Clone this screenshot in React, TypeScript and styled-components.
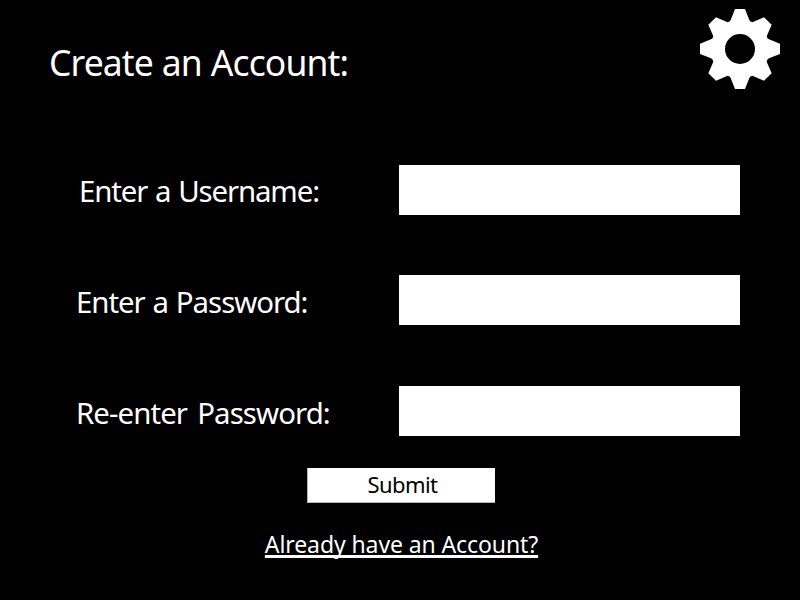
import React from "react";
import styled, { createGlobalStyle } from "styled-components";

const GlobalStyle = createGlobalStyle`
  * { box-sizing: border-box; }
  body { margin: 0; background: #000; }
`;

const Page = styled.main`
  display: flex;
  flex-direction: column;
  width: 800px;
  height: 600px;
  overflow: hidden;
  background: #000;
  color: #fff;
  font-family: "Noto Sans", "Open Sans", sans-serif;
`;

const Header = styled.header`
  display: flex;
  justify-content: space-between;
  height: 165px;
  padding: 9px 20px 0 49px;
`;

const Title = styled.h1`
  margin: 28px 0 0;
  height: 50px;
  font-size: 35.5px;
  line-height: 50px;
  font-weight: 400;
  letter-spacing: -0.88px;
  word-spacing: 0.5px;
  white-space: nowrap;
`;

const SettingsButton = styled.button`
  width: 80px;
  height: 80px;
  padding: 0;
  border: 0;
  background: none;
  color: #fff;

  svg { display: block; }
`;

const Form = styled.form`
  display: flex;
  flex-direction: column;
  align-items: center;
`;

const Fields = styled.div`
  display: grid;
  grid-template-rows: 110px 111px 50px;
  width: 800px;
`;

const Field = styled.div`
  display: grid;
  grid-template-columns: 399px 341px;
  align-items: start;
`;

const Label = styled.label<{ $indent: number; $tracking: number; $gap: number; $drop: number }>`
  padding-left: ${(p) => p.$indent}px;
  padding-top: ${(p) => p.$drop}px;
  height: 50px;
  font-size: 29.4px;
  line-height: 50px;
  letter-spacing: ${(p) => p.$tracking}px;
  word-spacing: ${(p) => p.$gap}px;
  white-space: nowrap;
`;

const Input = styled.input`
  width: 341px;
  height: 50px;
  padding: 0 10px;
  border: 0;
  border-radius: 0;
  background: #fff;
  font: 400 24px "Noto Sans", sans-serif;
`;

const Submit = styled.button`
  width: 188px;
  height: 35px;
  margin: 32px 0 0 2px;
  padding: 0 0 1px 2px;
  border: 1px solid #b4b8b4;
  border-width: 0 0 1px 1px;
  background: #fff;
  color: #000;
  font: 400 22px/33px "Noto Sans", "Open Sans", sans-serif;
  letter-spacing: -0.6px;
`;

const LoginLink = styled.a`
  margin: 25px 0 0 3px;
  height: 32px;
  color: #fff;
  font-size: 23px;
  line-height: 32px;
  letter-spacing: -0.1px;
  white-space: nowrap;
  text-decoration: underline;
  text-decoration-thickness: 3px;
  text-underline-offset: 2px;
  text-decoration-skip-ink: none;
`;

const GearIcon = () => (
  <svg width="80" height="80" viewBox="30 27 240 240" aria-hidden="true">
    <path
      fill="currentColor"
      fillRule="evenodd"
      d="M135 27H165L178 60Q180 66 187 67L222 52L245 74L230 109Q231 116 237 118L270 131V162L237 175Q231 178 230 185L245 220L222 242L187 227Q180 228 178 234L165 267H135L122 234Q120 228 113 227L78 242L55 220L70 185Q69 178 63 175L30 162V131L63 118Q69 116 70 109L55 74L78 52L113 67Q120 66 122 60Z
      M150 102A45 45 0 1 0 150 192A45 45 0 1 0 150 102Z"
    />
  </svg>
);

const fields = [
  { id: "username", label: "Enter a Username:", type: "text", indent: 79, tracking: -1.14, gap: 1.4, drop: 1 },
  { id: "password", label: "Enter a Password:", type: "password", indent: 76, tracking: -1.02, gap: 1.2, drop: 2 },
  { id: "confirm", label: "Re-enter Password:", type: "password", indent: 76, tracking: -0.92, gap: 3.5, drop: 2 },
];

export default function App() {
  return (
    <>
      <GlobalStyle />
      <Page>
        <Header>
          <Title>Create an Account:</Title>
          <SettingsButton type="button" aria-label="Settings">
            <GearIcon />
          </SettingsButton>
        </Header>
        <Form onSubmit={(e) => e.preventDefault()}>
          <Fields>
            {fields.map((f) => (
              <Field key={f.id}>
                <Label
                  htmlFor={f.id}
                  $indent={f.indent}
                  $tracking={f.tracking}
                  $gap={f.gap}
                  $drop={f.drop}
                >
                  {f.label}
                </Label>
                <Input id={f.id} type={f.type} />
              </Field>
            ))}
          </Fields>
          <Submit type="submit">Submit</Submit>
          <LoginLink href="#">Already have an Account?</LoginLink>
        </Form>
      </Page>
    </>
  );
}
